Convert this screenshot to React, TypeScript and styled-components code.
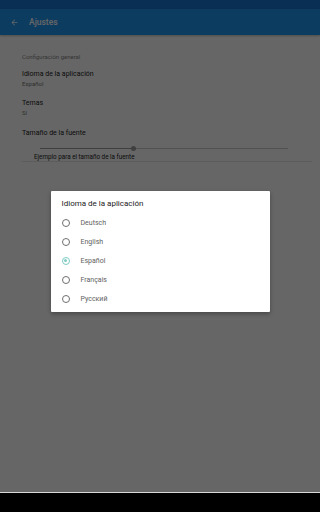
import React from "react";
import styled, { createGlobalStyle } from "styled-components";

const GlobalStyle = createGlobalStyle`
  html, body {
    margin: 0;
    padding: 0;
    background: #000;
  }
  body {
    font-family: Roboto, "Noto Sans", sans-serif;
  }
`;

const languages = ["Deutsch", "English", "Español", "Français", "Русский"];
const selected = "Español";

function App() {
  return (
    <Screen>
      <GlobalStyle />
      <Device>
        <StatusBar />
        <Toolbar>
          <BackArrow viewBox="0 0 24 24">
            <path d="M20 11H7.83l5.59-5.59L12 4l-8 8 8 8 1.41-1.41L7.83 13H20v-2z" />
          </BackArrow>
          <Title>Ajustes</Title>
        </Toolbar>
        <Content>
          <Category>Configuración general</Category>
          <Pref $gap={11}>
            <PrefTitle>Idioma de la aplicación</PrefTitle>
            <PrefSummary>Español</PrefSummary>
          </Pref>
          <Pref $gap={12}>
            <PrefTitle>Temas</PrefTitle>
            <PrefSummary>Sí</PrefSummary>
          </Pref>
          <Pref $gap={6}>
            <PrefTitle>Tamaño de la fuente</PrefTitle>
          </Pref>
          <SliderRow>
            <Track>
              <TrackFill style={{ width: `${(93 / 248) * 100}%` }} />
              <Thumb style={{ left: `${(93 / 248) * 100}%` }} />
            </Track>
          </SliderRow>
          <Sample>Ejemplo para el tamaño de la fuente</Sample>
          <Divider />
        </Content>
        <Scrim>
          <Dialog>
            <DialogTitle>Idioma de la aplicación</DialogTitle>
            {languages.map((lang) => (
              <Option key={lang}>
                <Radio $on={lang === selected} />
                <OptionLabel>{lang}</OptionLabel>
              </Option>
            ))}
          </Dialog>
        </Scrim>
      </Device>
      <NavBar />
    </Screen>
  );
}

export default App;

const Screen = styled.div`
  width: 320px;
  height: 512px;
  display: flex;
  flex-direction: column;
  overflow: hidden;
  background: #000;
`;

const Device = styled.div`
  position: relative;
  height: 493px;
  display: flex;
  flex-direction: column;
  background: #fff;
  border-bottom: 1px solid #d8d8d8;
  box-sizing: border-box;
`;

const StatusBar = styled.div`
  height: 9px;
  background: #1976d2;
`;

const Toolbar = styled.div`
  height: 26px;
  background: #2196f3;
  display: flex;
  align-items: center;
  padding-left: 10px;
  gap: 10px;
  box-shadow: 0 1px 2px rgba(0, 0, 0, 0.25);
`;

const BackArrow = styled.svg`
  width: 9px;
  height: 9px;
  fill: #fff;
`;

const Title = styled.div`
  color: #fff;
  font-size: 8.5px;
  font-weight: 500;
`;

const Content = styled.div`
  flex: 1;
  padding: 18px 8px 0 22px;
  display: flex;
  flex-direction: column;
`;

const Category = styled.div`
  font-size: 6px;
  color: #8a8a8a;
  line-height: 8px;
  margin-bottom: 9px;
`;

const Pref = styled.div<{ $gap: number }>`
  display: flex;
  flex-direction: column;
  margin-bottom: ${(p) => p.$gap}px;
`;

const PrefTitle = styled.div`
  font-size: 7px;
  color: #212121;
  line-height: 9px;
`;

const PrefSummary = styled.div`
  font-size: 6px;
  color: #757575;
  line-height: 9px;
`;

const SliderRow = styled.div`
  padding: 0 24px 0 18px;
  height: 9px;
  display: flex;
  align-items: center;
`;

const Track = styled.div`
  position: relative;
  flex: 1;
  height: 1px;
  background: #c8c8c8;
`;

const TrackFill = styled.div`
  height: 1px;
  background: #9e9e9e;
`;

const Thumb = styled.div`
  position: absolute;
  top: -2px;
  width: 5px;
  height: 5px;
  margin-left: -2.5px;
  border-radius: 50%;
  background: #9e9e9e;
`;

const Sample = styled.div`
  font-size: 6.3px;
  color: #212121;
  line-height: 8px;
  padding-left: 12px;
`;

const Divider = styled.div`
  height: 1px;
  background: #e6e6e6;
`;

const Scrim = styled.div`
  position: absolute;
  inset: 0;
  background: rgba(0, 0, 0, 0.6);
  display: flex;
  flex-direction: column;
  align-items: center;
  padding-top: 191px;
`;

const Dialog = styled.div`
  width: 219px;
  background: #fff;
  padding: 8px 0 4px;
  box-sizing: border-box;
  box-shadow: 0 2px 4px rgba(0, 0, 0, 0.3);
  border-radius: 1px;
`;

const DialogTitle = styled.div`
  font-size: 8px;
  color: #212121;
  line-height: 10px;
  padding-left: 11px;
  margin-bottom: 4px;
`;

const Option = styled.div`
  height: 19px;
  display: flex;
  align-items: center;
  padding-left: 11px;
  gap: 11px;
`;

const Radio = styled.div<{ $on: boolean }>`
  width: 6px;
  height: 6px;
  border-radius: 50%;
  border: 1px solid ${(p) => (p.$on ? "#80cbc4" : "#6f6f6f")};
  display: flex;
  align-items: center;
  justify-content: center;
  &::after {
    content: "";
    width: 3px;
    height: 3px;
    border-radius: 50%;
    background: ${(p) => (p.$on ? "#80cbc4" : "transparent")};
  }
`;

const OptionLabel = styled.div`
  font-size: 7px;
  color: #616161;
`;

const NavBar = styled.div`
  flex: 1;
  background: #000;
`;
